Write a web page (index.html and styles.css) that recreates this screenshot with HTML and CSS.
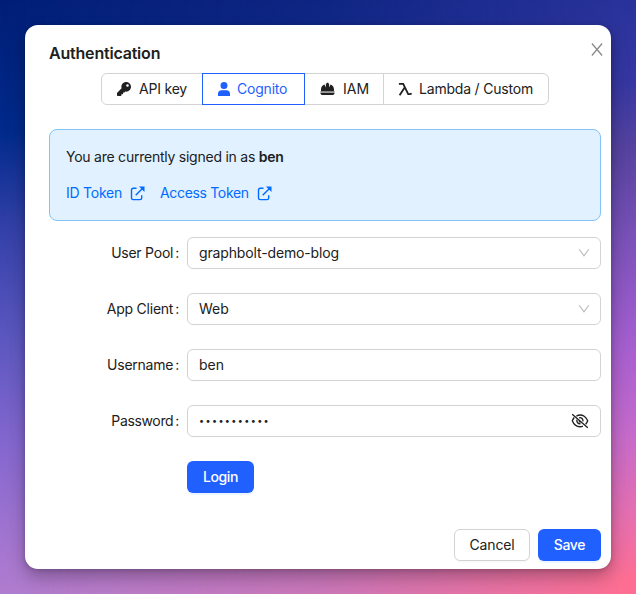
FILE: index.html
```html
<!DOCTYPE html>
<html lang="en">
<head>
<meta charset="utf-8">
<title>Authentication</title>
<link rel="stylesheet" href="styles.css">
</head>
<body>
<main class="modal">
  <header class="modal-header">
    <h1 class="title">Authentication</h1>
    <button class="close" aria-label="Close"><svg width="12" height="13" viewBox="0 0 12 13"><path d="M.9.5 11.1 12.5M11.1.5.9 12.5" fill="none" stroke="currentColor" stroke-width="1.25"/></svg></button>
  </header>
  <nav class="tabs">
    <button class="tab tab-key"><svg class="icon" viewBox="0 0 512 512"><path fill="currentColor" d="M512 176c0 97-79 176-176 176-11 0-22-1-33-3l-24 27c-5 5-11 8-18 8h-37v40c0 13-11 24-24 24h-40v40c0 13-11 24-24 24H24c-13 0-24-11-24-24v-78c0-6 3-12 7-17l162-162C163 214 160 195 160 176 160 79 239 0 336 0s176 79 176 176zm-176-48a48 48 0 1 0 96 0 48 48 0 1 0-96 0z"/></svg><span>API key</span></button>
    <button class="tab tab-cognito active"><svg class="icon" viewBox="0 0 14 14"><path fill="currentColor" d="M7 0a3.5 3.5 0 1 1 0 7 3.5 3.5 0 0 1 0-7ZM1 14v-2.3C1 9.6 2.4 8.2 4.5 8.2h5c2.1 0 3.5 1.4 3.5 3.5V14Z"/></svg><span>Cognito</span></button>
    <button class="tab tab-iam"><svg class="icon hat" viewBox="0 0 15 14"><path fill="currentColor" d="M1 9V7.5C1 5 2.4 3.2 4.5 2.5l1.4 3V1.6h.8V.8h1.6v.8h.8v3.9l1.4-3C12.6 3.2 14 5 14 7.5V9ZM.4 10.7h14.2c0 1.4-1 2.3-2.5 2.3H2.9C1.4 13 .4 12.1.4 10.7Z"/><path fill="#888" d="M.5 9h14v1.7H.5z"/></svg><span>IAM</span></button>
    <button class="tab tab-lambda"><svg class="icon" viewBox="0 0 14 14"><path fill="none" stroke="currentColor" stroke-width="1.8" d="M.9 1.8h4.3l5 10.4h1.6l1.9-.6M6.7 5.4 1.6 13.2"/></svg><span>Lambda / Custom</span></button>
  </nav>
  <section class="notice">
    <p class="status">You are currently signed in as <strong>ben</strong></p>
    <div class="links">
      <a class="link id-link"><span>ID Token</span><svg class="ext" viewBox="0 0 15 15"><path d="M6.5 2.2H3.2q-1.7 0-1.7 1.7v8q0 1.7 1.7 1.7H10q1.7 0 1.7-1.7V9.2M5.7 9.3l6.8-6.8" fill="none" stroke="currentColor" stroke-width="1.4"/><path d="M9 .5h5.5V6Z" fill="currentColor"/></svg></a>
      <a class="link access-link"><span>Access Token</span><svg class="ext" viewBox="0 0 15 15"><path d="M6.5 2.2H3.2q-1.7 0-1.7 1.7v8q0 1.7 1.7 1.7H10q1.7 0 1.7-1.7V9.2M5.7 9.3l6.8-6.8" fill="none" stroke="currentColor" stroke-width="1.4"/><path d="M9 .5h5.5V6Z" fill="currentColor"/></svg></a>
    </div>
  </section>
  <form class="form">
    <div class="row"><label class="label">User Pool<i class="colon">:</i></label><div class="field"><span class="v-pool">graphbolt-demo-blog</span><svg class="chevron" viewBox="0 0 12 10"><path d="m1.2 1.2 4.8 6.6 4.8-6.6" fill="none" stroke="currentColor" stroke-width="1.1"/></svg></div></div>
    <div class="row"><label class="label">App Client<i class="colon">:</i></label><div class="field"><span>Web</span><svg class="chevron" viewBox="0 0 12 10"><path d="m1.2 1.2 4.8 6.6 4.8-6.6" fill="none" stroke="currentColor" stroke-width="1.1"/></svg></div></div>
    <div class="row"><label class="label">Username<i class="colon">:</i></label><div class="field"><span>ben</span></div></div>
    <div class="row"><label class="label l-pass">Password<i class="colon">:</i></label><div class="field"><span class="dots">•••••••••••</span><svg class="eye" viewBox="0 0 18 16"><g fill="none" stroke="currentColor" stroke-width="1.35"><path d="M1.2 1.2 16.8 14.8M5.4 3.1C7.8 1.7 11 1.8 13.2 3.3c1.5 1 2.7 2.7 3.5 4.5-.5 1.3-1.2 2.4-2.1 3.4M3.2 4.5C2.4 5.5 1.8 6.6 1.3 7.8 2.8 11.6 5.7 13.7 9 13.7c1 0 2-.2 2.9-.6M8.1 4.8c2.4-.6 4.3 1.4 3.7 3.6M6 6.7C5.3 9 7.2 11.2 9.5 10.7M8.1 8c.2.6.7 1 1.3 1"/></g></svg></div></div>
    <div class="row"><button type="button" class="btn primary login">Login</button></div>
  </form>
  <footer class="footer">
    <button class="btn cancel">Cancel</button>
    <button class="btn primary save">Save</button>
  </footer>
</main>
</body>
</html>
```

FILE: styles.css
```css
* { box-sizing: border-box; }
body {
  margin: 0;
  width: 636px;
  height: 594px;
  padding: 25px;
  overflow: hidden;
  position: relative;
  isolation: isolate;
  font: 14px/22px Inter, "Liberation Sans", sans-serif;
  color: #202020;
  background: linear-gradient(#001e76 0, #002a8b 130px, #3441a9 230px, #5a57bf 335px, #8267ce 440px, #a878d1 560px, #af7dcf 594px);
}
body::before {
  content: "";
  position: absolute;
  inset: 0;
  z-index: -1;
  background: linear-gradient(#29339b 0, #3637a2 80px, #58439f 150px, #7c52b9 240px, #a75fd0 345px, #c56acb 430px, #e86fae 520px, #ff6e91 580px);
  mask-image: linear-gradient(90deg, transparent 0, rgb(0 0 0 / .35) 50%, #000 100%);
}
button { margin: 0; padding: 0; border: 0; background: none; font: inherit; color: inherit; }
svg { display: block; flex: none; }
.modal {
  width: 586px;
  height: 544px;
  padding: 16px 10px 8px 24px;
  display: flex;
  flex-direction: column;
  border-radius: 13px;
  background: #fff;
  box-shadow: 0 8px 18px rgb(0 0 0 / .28), 0 1px 5px rgb(0 0 0 / .18);
}
.modal-header { height: 32px; display: flex; justify-content: space-between; align-items: flex-start; }
.title { margin: 0; font-size: 16px; line-height: 25px; font-weight: 600; letter-spacing: -.2px; }
.close { height: 13px; margin: 2px -2px 0 0; color: #888; }
.tabs { display: flex; align-self: center; height: 32px; }
.tab { display: flex; align-items: center; gap: 8px; padding-left: 15px; border: 1px solid #d3d3d3; white-space: nowrap; letter-spacing: -.2px; }
.tab + .tab { margin-left: -1px; }
.tab-key { width: 102px; border-radius: 6px 0 0 6px; }
.tab-cognito { width: 103px; gap: 6px; padding-left: 14px; }
.tab-iam { width: 80px; letter-spacing: 0; }
.tab-lambda { width: 166px; gap: 7px; padding-left: 14px; border-radius: 0 6px 6px 0; }
.tab.active { color: #1f60ff; border-color: #1f60ff; z-index: 1; }
.icon { width: 14px; height: 14px; }
.hat { width: 15px; }
.notice { height: 92px; margin-top: 24px; padding: 15px 16px 16px; border: 1px solid #82c4f8; border-radius: 8px; background: #e1f1ff; letter-spacing: -.24px; }
.status { margin: 0; line-height: 23px; }
.status strong { font-weight: 600; }
.links { display: flex; gap: 15px; margin-top: 14px; color: #006bff; }
.link { display: flex; align-items: center; gap: 8px; }
.access-link { letter-spacing: -.33px; }
.ext { width: 15px; height: 15px; }
.form { display: flex; flex-direction: column; gap: 24px; margin-top: 16px; }
.row { display: flex; height: 32px; padding-left: 138px; }
.label { width: 138px; margin-left: -138px; padding-right: 8px; text-align: right; line-height: 32px; letter-spacing: -.24px; }
.l-pass { letter-spacing: -.35px; }
.colon { font-style: normal; margin-left: 2px; }
.field { flex: 1; display: flex; align-items: center; justify-content: space-between; padding: 0 11px; border: 1px solid #d3d3d3; border-radius: 6px; }
.v-pool { letter-spacing: -.14px; }
.chevron { width: 12px; height: 10px; color: #b9b9b9; margin-right: -1px; }
.eye { width: 18px; height: 16px; }
.dots { font-size: 9px; letter-spacing: 1.4px; }
.btn { height: 32px; border-radius: 6px; text-align: center; letter-spacing: -.15px; }
.primary { background: #1f60ff; color: #fff; font-weight: 500; letter-spacing: -.35px; box-shadow: 0 2px 0 rgb(5 130 255 / .08); }
.login { width: 67px; }
.footer { display: flex; justify-content: flex-end; gap: 8px; margin-top: auto; }
.cancel { width: 76px; border: 1px solid #d3d3d3; box-shadow: 0 2px 0 rgb(0 0 0 / .02); }
.save { width: 63px; }
```
